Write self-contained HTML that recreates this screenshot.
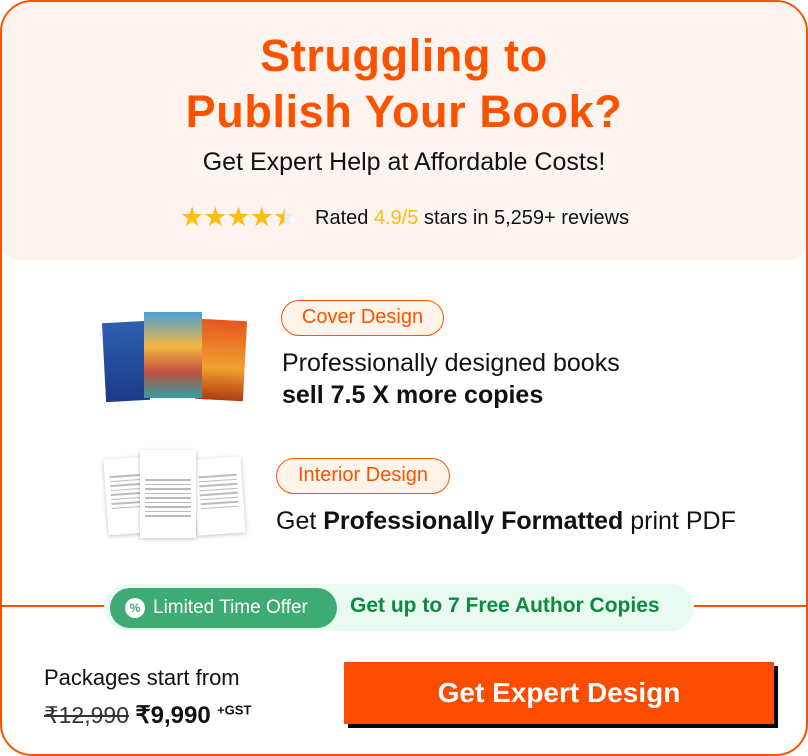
<!DOCTYPE html>
<html><head><meta charset="utf-8"><style>
*{margin:0;padding:0;box-sizing:border-box}
body{width:808px;height:756px;background:#fff;font-family:"Liberation Sans",sans-serif;overflow:hidden;position:relative}
.card{position:absolute;left:0;top:0;width:808px;height:756px;border:2px solid #fb5200;border-radius:32px;overflow:hidden;background:#fff}
.hdr{position:absolute;left:0;top:0;width:804px;height:258px;background:#fdf3ef;border-radius:0 0 16px 16px}
.t{position:absolute;left:0;width:804px;text-align:center}
.h1{color:#fb5200;font-size:45px;font-weight:bold;letter-spacing:0.6px}
.pill{position:absolute;border:1.5px solid #fb5200;background:#fff4ea;color:#fb5200;border-radius:20px;font-size:20px;text-align:center;line-height:33px;height:36px}
.txt{position:absolute;font-size:25px;color:#111}
.line{position:absolute;top:603px;height:2px;background:#fb5200}
.page{position:absolute;background:#fff;box-shadow:0 1px 4px rgba(0,0,0,.25)}
.page i{display:block;height:1.5px;background:#bbb;margin:3px 5px}
</style></head><body>
<div class="card">
<div class="hdr"></div>
<div class="t h1" style="top:28px">Struggling to</div>
<div class="t h1" style="top:84px">Publish Your Book?</div>
<div class="t" style="top:146px;font-size:25px;color:#111">Get Expert Help at Affordable Costs!</div>
<div style="position:absolute;left:178px;top:200px;font-size:27px;color:#fdbd10;letter-spacing:-1px">★★★★<span style="background:linear-gradient(90deg,#fdbd10 50%,#e6eef5 50%);-webkit-background-clip:text;color:transparent">★</span></div>
<div style="position:absolute;left:313px;top:205px;font-size:20px;color:#111">Rated <span style="color:#fdbd10">4.9/5</span> stars in 5,259+ reviews</div>

<div style="position:absolute;left:102px;top:320px;width:44px;height:79px;background:linear-gradient(#2d5fb0,#1d3a8a);transform:rotate(-3deg)"></div>
<div style="position:absolute;left:195px;top:318px;width:48px;height:80px;background:linear-gradient(#e6561e,#f0a030 60%,#b03a10);transform:rotate(3deg)"></div>
<div style="position:absolute;left:142px;top:310px;width:58px;height:86px;background:linear-gradient(#4aa0d8,#f2b640 40%,#c05040 70%,#2fa0a0)"></div>

<div class="page" style="left:104px;top:456px;width:40px;height:76px;transform:rotate(-4deg);padding-top:14px"><i></i><i></i><i></i><i></i><i></i><i></i><i></i><i></i></div>
<div class="page" style="left:193px;top:456px;width:48px;height:76px;transform:rotate(-4deg);padding-top:14px"><i></i><i></i><i></i><i></i><i></i><i></i><i></i><i></i></div>
<div class="page" style="left:138px;top:448px;width:56px;height:88px;padding-top:26px"><i></i><i></i><i></i><i></i><i></i><i></i><i></i><i></i><i></i></div>

<div class="pill" style="left:279px;top:298px;width:163px">Cover Design</div>
<div class="txt" style="left:280px;top:347px">Professionally designed books</div>
<div class="txt" style="left:280px;top:379px;font-weight:bold">sell 7.5 X more copies</div>
<div class="pill" style="left:274px;top:456px;width:174px">Interior Design</div>
<div class="txt" style="left:274px;top:505px">Get <b>Professionally Formatted</b> print PDF</div>

<div class="line" style="left:0;width:104px"></div>
<div class="line" style="left:690px;width:120px"></div>
<div style="position:absolute;left:102px;top:582px;width:590px;height:47px;background:#e9fbf0;border-radius:24px"></div>
<div style="position:absolute;left:108px;top:586px;width:227px;height:40px;background:#3dab73;border-radius:20px;color:#fff;font-size:19px;line-height:40px;padding-left:43px">Limited Time Offer</div>
<div style="position:absolute;left:123px;top:596px;width:20px;height:20px;border-radius:50%;background:#fff;color:#3dab73;font-size:12px;font-weight:bold;text-align:center;line-height:20px">%</div>
<div style="position:absolute;left:348px;top:592px;font-size:21px;color:#0c8a3e;font-weight:bold">Get up to 7 Free Author Copies</div>

<div style="position:absolute;left:42px;top:663px;font-size:22px;color:#111">Packages start from</div>
<div style="position:absolute;left:42px;top:699px;font-size:23px;color:#111"><s style="color:#333">₹12,990</s> <b style="font-size:24px">₹9,990</b> <sup style="font-size:13px;font-weight:bold">+GST</sup></div>
<div style="position:absolute;left:346px;top:664px;width:430px;height:62px;background:#000"></div>
<div style="position:absolute;left:342px;top:660px;width:430px;height:62px;background:#fb4c00;color:#fff;font-size:28px;font-weight:bold;text-align:center;line-height:62px">Get Expert Design</div>
</div>
</body></html>
